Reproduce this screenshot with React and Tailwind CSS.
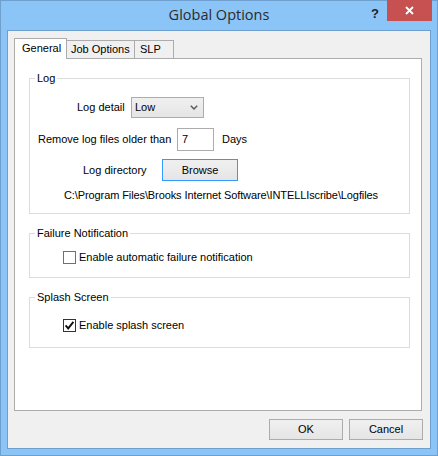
const WinButton = ({ children, focused, className = '' }) => (
  <div
    className={`flex items-center justify-center bg-linear-to-b from-[#f0f0f0] to-[#e5e5e5] border ${
      focused ? 'border-[#3399ff]' : 'border-[#acacac]'
    } ${className}`}
  >
    {children}
  </div>
);

const CheckBox = ({ checked, border = 'border-[#333333]' }) => (
  <div className={`w-[13px] h-[13px] border ${border} bg-white flex items-center justify-center shrink-0`}>
    {checked && (
      <svg width="11" height="11" viewBox="0 0 11 11">
        <path d="M1.6 5.4 L4.2 8.4 L9.4 1.8" fill="none" stroke="#111" strokeWidth="1.9" />
      </svg>
    )}
  </div>
);

const Group = ({ title, className = '', children }) => (
  <fieldset className={`border border-[#dcdcdc] m-0 p-0 min-w-0 ${className}`}>
    <legend className="ml-[5px] px-[2px] leading-[15px]">{title}</legend>
    {children}
  </fieldset>
);

export default function App() {
  return (
    <div className="w-[438px] h-[456px] bg-[#8bc4f7] border border-[#6f9fcf] flex flex-col font-['Liberation_Sans',Arial,sans-serif] text-[11px] text-black select-none">
      {/* title bar */}
      <div className="relative h-[29px] shrink-0 flex items-center justify-center">
        <span className="font-['Open_Sans',sans-serif] text-[14.5px] text-[#2b2b2b] leading-none -mt-[1px]">Global Options</span>
        <span className="absolute right-[58px] top-[6px] font-bold text-[13px] leading-none text-[#222]">?</span>
        <div className="absolute right-[5px] -top-px w-[45px] h-[21px] bg-[#c75050] flex items-center justify-center">
          <svg width="9" height="9" viewBox="0 0 9 9">
            <path d="M1 1 L8 8 M8 1 L1 8" stroke="#fff" strokeWidth="1.8" />
          </svg>
        </div>
      </div>

      {/* client area */}
      <div className="mx-[6px] mb-[6px] flex-1 border border-[#6f9fcf] bg-[#f0f0f0] flex flex-col pt-[7px] pl-[6px] pr-[8px]">
        {/* tabs */}
        <div className="flex items-end h-[20px]">
          <div className="relative z-10 -mb-px h-[21px] w-[53px] bg-white border border-b-0 border-[#acacac] pl-[7px] pt-[2px] leading-[15px]">
            General
          </div>
          <div className="-ml-px h-[18px] w-[69px] bg-[#f0f0f0] border border-b-0 border-[#acacac] pl-[4px] pt-[1px] leading-[15px]">
            Job Options
          </div>
          <div className="-ml-px h-[18px] w-[40px] bg-[#f0f0f0] border border-b-0 border-[#acacac] pl-[5px] pt-[1px] leading-[15px]">
            SLP
          </div>
        </div>

        {/* tab page */}
        <div className="h-[353px] bg-white border border-[#acacac] flex flex-col pl-[14px] pr-[11px] pt-[12px]">
          <Group title="Log" className="h-[143px]">
            <div className="mt-[11px] flex items-center h-[21px]">
              <span className="ml-[47px] w-[54px] whitespace-nowrap">Log detail</span>
              <div className="w-[73px] h-[21px] border border-[#acacac] bg-linear-to-b from-[#f0f0f0] to-[#e5e5e5] flex items-center justify-between pl-[3px] pr-[5px]">
                <span>Low</span>
                <svg width="8" height="5" viewBox="0 0 8 5">
                  <path d="M0.8 0.8 L4 4 L7.2 0.8" fill="none" stroke="#555" strokeWidth="1.4" />
                </svg>
              </div>
            </div>
            <div className="mt-[10px] flex items-center h-[23px]">
              <span className="ml-[8px] w-[139px] whitespace-nowrap">Remove log files older than</span>
              <div className="w-[37px] h-[23px] border border-[#acacac] bg-white pl-[4px] pt-[3px] leading-[15px]">7</div>
              <span className="ml-[8px]">Days</span>
            </div>
            <div className="mt-[8px] flex items-center h-[22px]">
              <span className="ml-[53px] w-[79px] whitespace-nowrap">Log directory</span>
              <WinButton focused className="w-[76px] h-[22px]">Browse</WinButton>
            </div>
            <div className="mt-[7px] ml-[34px] leading-[15px] whitespace-nowrap tracking-[-0.1px]">
              C:\Program Files\Brooks Internet Software\INTELLIscribe\Logfiles
            </div>
          </Group>

          <Group title="Failure Notification" className="h-[52px] mt-[12px]">
            <div className="mt-[10px] ml-[33px] flex items-center h-[13px]">
              <CheckBox border="border-[#707070]" />
              <span className="ml-[3px] whitespace-nowrap">Enable automatic failure notification</span>
            </div>
          </Group>

          <Group title="Splash Screen" className="h-[58px] mt-[12px]">
            <div className="mt-[14px] ml-[33px] flex items-center h-[13px]">
              <CheckBox checked />
              <span className="ml-[3px] whitespace-nowrap">Enable splash screen</span>
            </div>
          </Group>
        </div>

        {/* dialog buttons */}
        <div className="mt-[8px] -mr-px flex justify-end gap-[6px]">
          <WinButton className="w-[74px] h-[21px]">OK</WinButton>
          <WinButton className="w-[74px] h-[21px]">Cancel</WinButton>
        </div>
      </div>
    </div>
  );
}
